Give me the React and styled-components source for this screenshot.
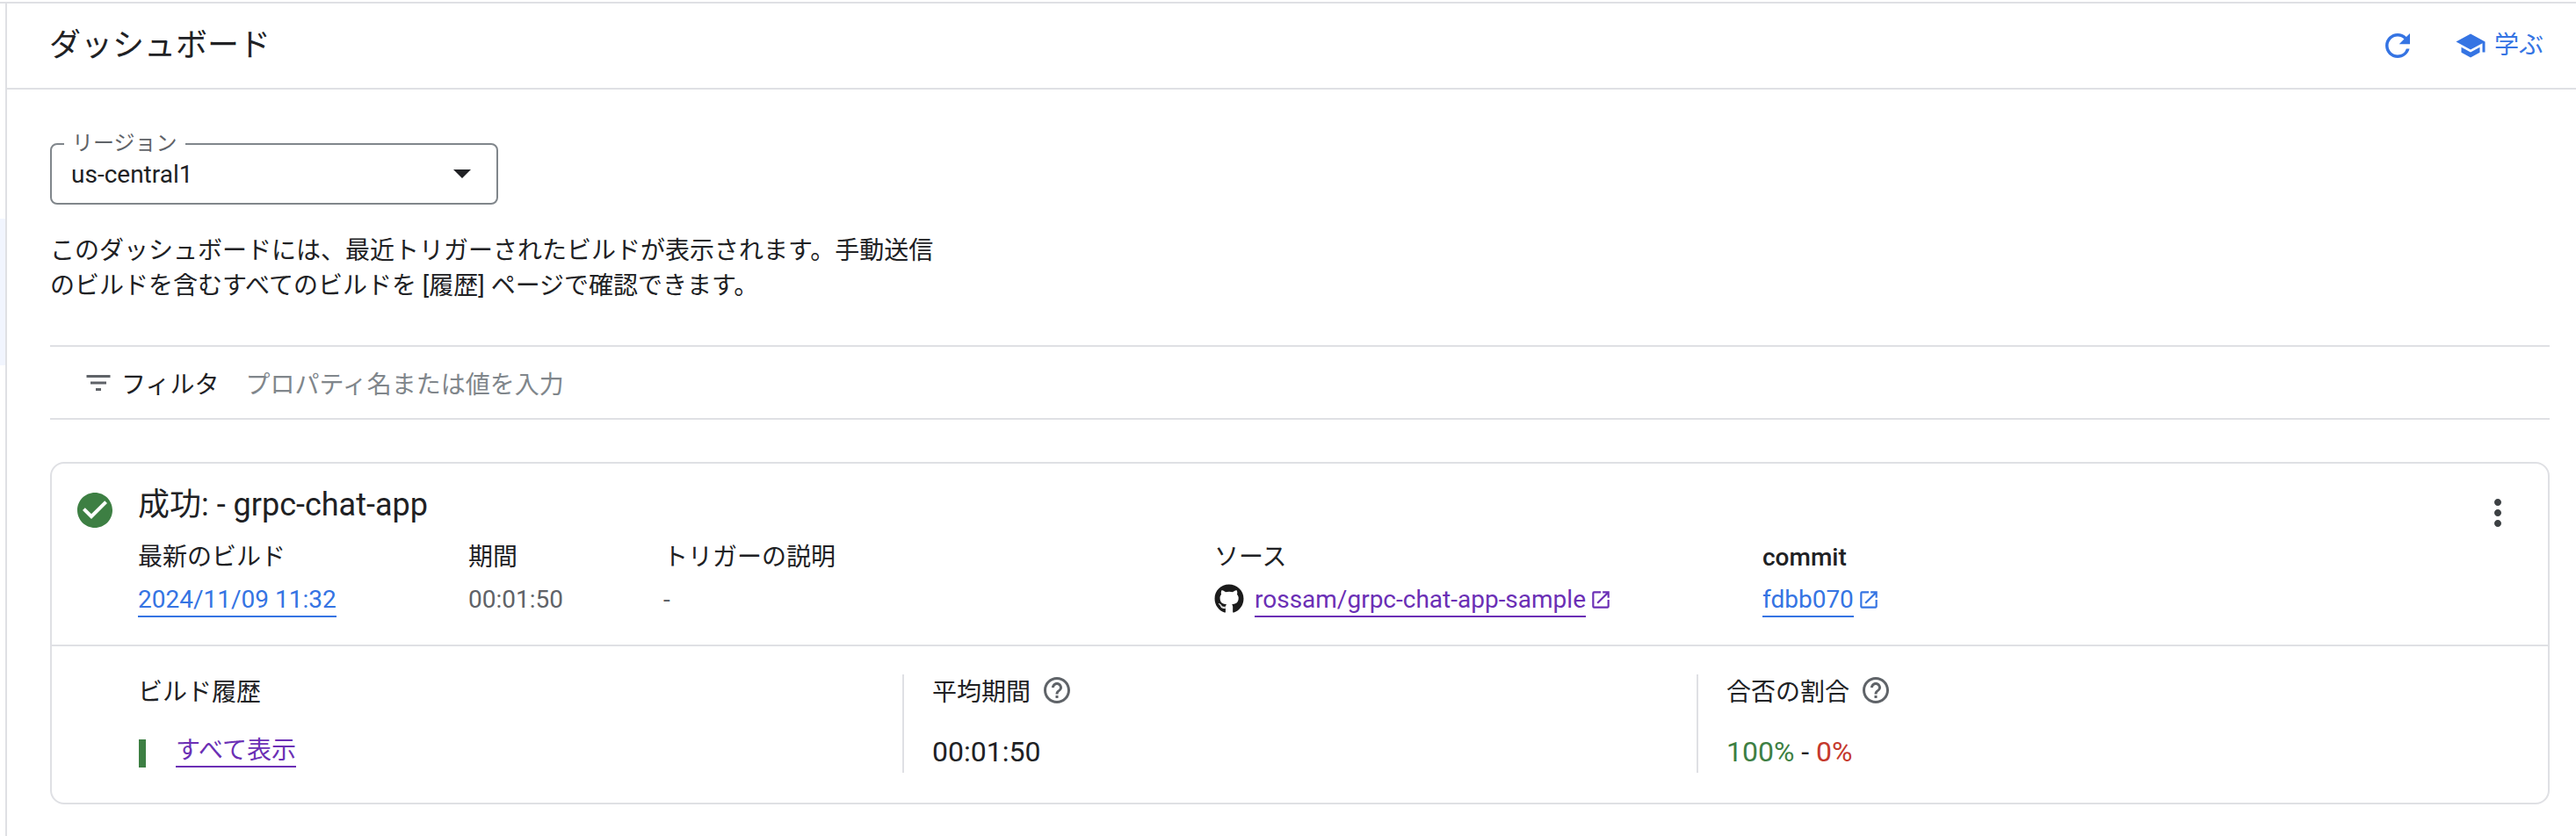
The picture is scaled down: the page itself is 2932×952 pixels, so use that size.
import React from "react";
import styled, { createGlobalStyle } from "styled-components";
import {
  MdCheckCircle,
  MdFilterList,
  MdHelpOutline,
  MdMoreVert,
  MdOpenInNew,
  MdRefresh,
  MdSchool,
} from "react-icons/md";
import { FaGithub } from "react-icons/fa";

const BLUE = "#3574e3";
const PURPLE = "#6b2fb5";
const LINE = "#dfe0e4";

const GlobalStyle = createGlobalStyle`
  html, body {
    margin: 0;
    background: #fff;
    font-family: Roboto, "Noto Sans CJK JP", sans-serif;
    color: #202124;
  }
  * { box-sizing: border-box; }
`;

const Shell = styled.div`
  margin-top: 2px;
  height: 950px;
  border-top: 2px solid ${LINE};
  display: flex;
  overflow: hidden;
`;

const Gutter = styled.div`
  width: 6px;
  flex-shrink: 0;
`;

const NavHighlight = styled.div`
  margin-top: 245px;
  height: 167px;
  background: #f1f5fe;
`;

const Main = styled.main`
  flex: 1;
  min-width: 0;
  border-left: 2px solid ${LINE};
`;

const Header = styled.header`
  height: 98px;
  border-bottom: 2px solid ${LINE};
  display: flex;
  align-items: center;
  justify-content: space-between;
  padding: 0 37px 0 48px;
`;

const Title = styled.h1`
  margin: 0;
  font-size: 36px;
  font-weight: 400;
  line-height: 48px;
`;

const Actions = styled.div`
  display: flex;
  align-items: center;
  gap: 44px;
  color: ${BLUE};
`;

const LearnButton = styled.div`
  display: flex;
  align-items: center;
  gap: 9px;
  font-size: 28px;
  line-height: 40px;
`;

const Content = styled.div`
  padding: 61px 30px 0 49px;
`;

const Select = styled.div`
  position: relative;
  width: 510px;
  height: 70px;
  border: 2px solid #80868b;
  border-radius: 8px;
  display: flex;
  align-items: center;
  justify-content: space-between;
  padding: 0 29px 0 22px;
  font-size: 28px;
`;

const SelectLabel = styled.span`
  position: absolute;
  left: 14px;
  top: -17px;
  padding: 0 9px;
  background: #fff;
  color: #5f6368;
  font-size: 24px;
  line-height: 30px;
`;

const Caret = styled.span`
  width: 0;
  height: 0;
  border-left: 10px solid transparent;
  border-right: 10px solid transparent;
  border-top: 10px solid #202124;
`;

const Description = styled.p`
  width: 1020px;
  margin: 33px 0 0;
  font-size: 28px;
  line-height: 40px;
  color: #202124;
`;

const FilterBar = styled.div`
  margin-top: 47px;
  height: 85px;
  border-top: 2px solid ${LINE};
  border-bottom: 2px solid ${LINE};
  display: flex;
  align-items: center;
  padding-left: 37px;
  font-size: 28px;
`;

const FilterIcon = styled(MdFilterList)`
  color: #5f6368;
  flex-shrink: 0;
`;

const FilterLabel = styled.span`
  margin-left: 8px;
`;

const Placeholder = styled.span`
  margin-left: 30px;
  color: #80868b;
`;

const Card = styled.section`
  margin-top: 48px;
  height: 390px;
  border: 2px solid ${LINE};
  border-radius: 16px;
`;

const CardTop = styled.div`
  height: 208px;
  padding: 23px 33px 0 25px;
  display: flex;
  align-items: flex-start;
  border-bottom: 2px solid ${LINE};
`;

const StatusIcon = styled(MdCheckCircle)`
  color: #3d7f43;
  flex-shrink: 0;
  margin-top: 6px;
`;

const CardBody = styled.div`
  flex: 1;
  margin-left: 25px;
`;

const CardTitle = styled.h2`
  margin: 0;
  font-size: 36px;
  font-weight: 400;
  line-height: 48px;
`;

const MoreIcon = styled(MdMoreVert)`
  color: #3c4043;
  flex-shrink: 0;
  margin-top: 9px;
`;

const Details = styled.div`
  display: flex;
  margin-top: 16px;
`;

const DetailColumn = styled.div`
  width: ${(props) => props.$width}px;
  flex-shrink: 0;
  font-size: 28px;
`;

const DetailLabel = styled.div`
  line-height: 40px;
  font-weight: ${(props) => (props.$strong ? 500 : 400)};
`;

const DetailValue = styled.div`
  margin-top: 8px;
  height: 40px;
  display: flex;
  align-items: flex-start;
  color: #5f6368;
  line-height: 40px;
`;

const TextLink = styled.a`
  display: block;
  height: 40px;
  line-height: 40px;
  color: ${(props) => (props.$visited ? PURPLE : BLUE)};
  border-bottom: 2px solid currentColor;
`;

const External = styled(MdOpenInNew)`
  color: ${(props) => (props.$visited ? PURPLE : BLUE)};
  margin: 7px 0 0 4px;
`;

const GithubIcon = styled(FaGithub)`
  color: #1b1b1b;
  margin: 2px 12px 0 0;
`;

const CardBottom = styled.div`
  display: grid;
  grid-template-columns: repeat(3, 904px);
  padding: 32px 0 0 64px;
`;

const Metric = styled.div`
  height: 112px;
  padding-left: 32px;
  border-left: 2px solid ${(props) => (props.$first ? "transparent" : LINE)};
`;

const MetricLabel = styled.div`
  display: flex;
  align-items: center;
  gap: 12px;
  height: 36px;
  font-size: 28px;
`;

const HelpIcon = styled(MdHelpOutline)`
  color: #5f6368;
`;

const HistoryRow = styled.div`
  margin-top: 34px;
  display: flex;
  align-items: flex-end;
  gap: 34px;
  font-size: 28px;
`;

const HistoryBar = styled.span`
  width: 8px;
  height: 32px;
  margin-left: 1px;
  background: #3d7f43;
`;

const HistoryLink = styled.a`
  display: block;
  line-height: 34px;
  height: 36px;
  color: ${PURPLE};
  border-bottom: 2px solid currentColor;
`;

const MetricValue = styled.div`
  margin-top: 32px;
  font-size: 32px;
  line-height: 40px;
`;

const Pass = styled.span`
  color: #3d7f43;
`;

const Fail = styled.span`
  color: #c5392c;
`;

export default function App() {
  return (
    <>
      <GlobalStyle />
      <Shell>
        <Gutter>
          <NavHighlight />
        </Gutter>
        <Main>
          <Header>
            <Title>ダッシュボード</Title>
            <Actions>
              <MdRefresh size={42} />
              <LearnButton>
                <MdSchool size={36} />
                学ぶ
              </LearnButton>
            </Actions>
          </Header>
          <Content>
            <Select>
              <SelectLabel>リージョン</SelectLabel>
              us-central1
              <Caret />
            </Select>
            <Description>
              このダッシュボードには、最近トリガーされたビルドが表示されます。手動送信のビルドを含むすべてのビルドを [履歴] ページで確認できます。
            </Description>
            <FilterBar>
              <FilterIcon size={36} />
              <FilterLabel>フィルタ</FilterLabel>
              <Placeholder>プロパティ名または値を入力</Placeholder>
            </FilterBar>
            <Card>
              <CardTop>
                <StatusIcon size={48} />
                <CardBody>
                  <CardTitle>成功: - grpc-chat-app</CardTitle>
                  <Details>
                    <DetailColumn $width={376}>
                      <DetailLabel>最新のビルド</DetailLabel>
                      <DetailValue>
                        <TextLink>2024/11/09 11:32</TextLink>
                      </DetailValue>
                    </DetailColumn>
                    <DetailColumn $width={222}>
                      <DetailLabel>期間</DetailLabel>
                      <DetailValue>00:01:50</DetailValue>
                    </DetailColumn>
                    <DetailColumn $width={627}>
                      <DetailLabel>トリガーの説明</DetailLabel>
                      <DetailValue>-</DetailValue>
                    </DetailColumn>
                    <DetailColumn $width={624}>
                      <DetailLabel>ソース</DetailLabel>
                      <DetailValue>
                        <GithubIcon size={34} />
                        <TextLink $visited>rossam/grpc-chat-app-sample</TextLink>
                        <External $visited size={26} />
                      </DetailValue>
                    </DetailColumn>
                    <DetailColumn $width={300}>
                      <DetailLabel $strong>commit</DetailLabel>
                      <DetailValue>
                        <TextLink>fdbb070</TextLink>
                        <External size={26} />
                      </DetailValue>
                    </DetailColumn>
                  </Details>
                </CardBody>
                <MoreIcon size={48} />
              </CardTop>
              <CardBottom>
                <Metric $first>
                  <MetricLabel>ビルド履歴</MetricLabel>
                  <HistoryRow>
                    <HistoryBar />
                    <HistoryLink>すべて表示</HistoryLink>
                  </HistoryRow>
                </Metric>
                <Metric>
                  <MetricLabel>
                    平均期間
                    <HelpIcon size={36} />
                  </MetricLabel>
                  <MetricValue>00:01:50</MetricValue>
                </Metric>
                <Metric>
                  <MetricLabel>
                    合否の割合
                    <HelpIcon size={36} />
                  </MetricLabel>
                  <MetricValue>
                    <Pass>100%</Pass> - <Fail>0%</Fail>
                  </MetricValue>
                </Metric>
              </CardBottom>
            </Card>
          </Content>
        </Main>
      </Shell>
    </>
  );
}
